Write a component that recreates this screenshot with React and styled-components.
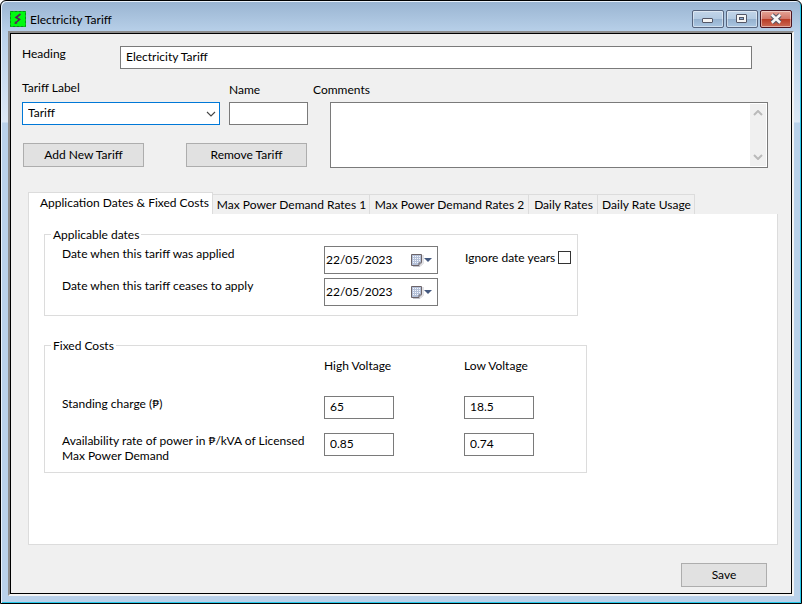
import React, { useState } from "react";
import styled, { createGlobalStyle } from "styled-components";

const tabs = [
  { id: "dates", name: "Application Dates & Fixed Costs", width: 185 },
  { id: "max1", name: "Max Power Demand Rates 1", width: 157 },
  { id: "max2", name: "Max Power Demand Rates 2", width: 159 },
  { id: "daily", name: "Daily Rates", width: 69 },
  { id: "usage", name: "Daily Rate Usage", width: 97 },
];

const costs = [
  { id: "standing", name: "Standing charge (₱)", high: "65", low: "18.5" },
  {
    id: "availability",
    name: "Availability rate of power in ₱/kVA of Licensed Max Power Demand",
    high: "0.85",
    low: "0.74",
  },
];

const BoltIcon = () => (
  <svg width="16" height="16" viewBox="0 0 16 16" aria-hidden="true">
    <rect width="16" height="16" fill="#00fa10" />
    <rect
      x="0.5"
      y="0.5"
      width="15"
      height="15"
      fill="none"
      stroke="#0c8a1c"
      strokeDasharray="3 1"
    />
    <path
      d="M10.5 3L6 6.5L9.5 8.5L5.5 12"
      fill="none"
      stroke="#5a1a5c"
      strokeWidth="1.6"
    />
    <path d="M4.5 13L5 10.3L7.5 12.5Z" fill="#5a1a5c" />
  </svg>
);

const MinimizeIcon = () => (
  <svg width="12" height="12" viewBox="0 0 12 12" aria-hidden="true">
    <rect x="0.5" y="5.5" width="10" height="4" rx="0.5" fill="#f4f4f4" stroke="#535666" />
  </svg>
);

const MaximizeIcon = () => (
  <svg width="12" height="12" viewBox="0 0 12 12" aria-hidden="true">
    <rect x="0.5" y="1.5" width="10" height="8" rx="0.5" fill="#f4f4f4" stroke="#535666" />
    <rect x="3.5" y="4.5" width="4" height="2" fill="#8fb0d6" stroke="#535666" />
  </svg>
);

const CloseIcon = () => (
  <svg width="12" height="12" viewBox="0 0 12 12" aria-hidden="true">
    <path d="M2 2L10 9.5M10 2L2 9.5" stroke="#535666" strokeWidth="4.6" />
    <path d="M1.8 1.8L10.2 9.7M10.2 1.8L1.8 9.7" stroke="#f6f6f6" strokeWidth="2.6" />
  </svg>
);

const Chevron = ({ up, color = "#444" }) => (
  <svg width="10" height="6" viewBox="0 0 10 6" aria-hidden="true">
    <path
      d={up ? "M1 5L5 1L9 5" : "M1 1L5 5L9 1"}
      fill="none"
      stroke={color}
      strokeWidth={up !== undefined ? 2 : 1.1}
    />
  </svg>
);

const CalendarIcon = () => (
  <svg width="22" height="14" viewBox="0 0 22 14" aria-hidden="true">
    <path d="M2 13.5H9L12 10.5V2" fill="none" stroke="#c4c4cc" />
    <path d="M0.5 1.5H10.5V9.5L8 12.5H0.5Z" fill="#b4c0d8" stroke="#6c6468" />
    <path
      d="M2 3.5H9M2 5.5H9M2 7.5H9M2 9.5H8"
      stroke="#f4f7fd"
      strokeWidth="1"
      strokeDasharray="1 1"
    />
    <path d="M8 12.5V10H10.5" fill="#d0d4de" stroke="#6c6468" />
    <path d="M13 5H21L17 9Z" fill="#44597f" />
  </svg>
);

function DateField({ id, value, onChange }) {
  return (
    <DateBox>
      <input id={id} type="text" value={value} onChange={(e) => onChange(e.target.value)} />
      <button type="button" aria-label="Open calendar">
        <CalendarIcon />
      </button>
    </DateBox>
  );
}

function App() {
  const [active, setActive] = useState("dates");
  const [applied, setApplied] = useState("22/05/2023");
  const [ceases, setCeases] = useState("22/05/2023");

  return (
    <>
      <GlobalStyle />
      <WindowStyled>
        <TitleBar>
          <BoltIcon />
          <h1>Electricity Tariff</h1>
          <CaptionButton type="button" aria-label="Minimize">
            <MinimizeIcon />
          </CaptionButton>
          <CaptionButton type="button" aria-label="Maximize">
            <MaximizeIcon />
          </CaptionButton>
          <CaptionButton type="button" aria-label="Close" $close>
            <CloseIcon />
          </CaptionButton>
        </TitleBar>

        <Frame>
          <Client>
            <HeadingRow>
              <label htmlFor="heading">Heading</label>
              <TextInput id="heading" type="text" defaultValue="Electricity Tariff" />
            </HeadingRow>

            <TariffRow>
              <TariffColumn>
                <FieldRow>
                  <Field $gap={7} $width={198}>
                    <label htmlFor="tariff">Tariff Label</label>
                    <SelectBox>
                      <select id="tariff" defaultValue="Tariff">
                        <option>Tariff</option>
                      </select>
                      <Chevron />
                    </SelectBox>
                  </Field>
                  <Field $gap={5} $width={79}>
                    <label htmlFor="name">Name</label>
                    <TextInput id="name" type="text" />
                  </Field>
                </FieldRow>
                <ButtonRow>
                  <Button type="button">Add New Tariff</Button>
                  <Button type="button">Remove Tariff</Button>
                </ButtonRow>
              </TariffColumn>
              <Comments>
                <label htmlFor="comments">Comments</label>
                <CommentsBox>
                  <textarea id="comments" />
                  <ScrollTrack>
                    <Chevron up color="#bababa" />
                    <Chevron up={false} color="#bababa" />
                  </ScrollTrack>
                </CommentsBox>
              </Comments>
            </TariffRow>

            <TabArea>
              <TabList role="tablist">
                {tabs.map((tab) => (
                  <Tab
                    key={tab.id}
                    type="button"
                    role="tab"
                    aria-selected={tab.id === active}
                    $active={tab.id === active}
                    $width={tab.width}
                    onClick={() => setActive(tab.id)}
                  >
                    {tab.name}
                  </Tab>
                ))}
              </TabList>
              <TabPanel role="tabpanel">
                {active === "dates" && (
                  <>
                    <Group $width={534}>
                      <legend>Applicable dates</legend>
                      <DatesGrid>
                        <label htmlFor="applied">Date when this tariff was applied</label>
                        <DateField id="applied" value={applied} onChange={setApplied} />
                        <CheckLabel>
                          Ignore date years
                          <input type="checkbox" />
                        </CheckLabel>
                        <label htmlFor="ceases">Date when this tariff ceases to apply</label>
                        <DateField id="ceases" value={ceases} onChange={setCeases} />
                      </DatesGrid>
                    </Group>

                    <Group $width={543}>
                      <legend>Fixed Costs</legend>
                      <CostTable>
                        <thead>
                          <tr>
                            <td />
                            <th scope="col">High Voltage</th>
                            <th scope="col">Low Voltage</th>
                          </tr>
                        </thead>
                        <tbody>
                          {costs.map((cost) => (
                            <tr key={cost.id}>
                              <th scope="row">
                                <label htmlFor={cost.id}>{cost.name}</label>
                              </th>
                              <td>
                                <TextInput id={cost.id} type="text" defaultValue={cost.high} />
                              </td>
                              <td>
                                <TextInput
                                  type="text"
                                  aria-label={`${cost.name}, Low Voltage`}
                                  defaultValue={cost.low}
                                />
                              </td>
                            </tr>
                          ))}
                        </tbody>
                      </CostTable>
                    </Group>
                  </>
                )}
              </TabPanel>
            </TabArea>

            <Footer>
              <Button type="button" $width={86}>
                Save
              </Button>
            </Footer>
          </Client>
        </Frame>
      </WindowStyled>
    </>
  );
}

const GlobalStyle = createGlobalStyle`
  * {
    box-sizing: border-box;
  }
  body {
    margin: 0;
    background: #fff;
    color: #000;
  }
  body, input, select, textarea, button {
    color: #000;
    font-family: "Segoe UI", Lato, "Open Sans", sans-serif;
    font-size: 12px;
    line-height: 15px;
  }
  label, legend, h1, button {
    white-space: nowrap;
  }
`;

const WindowStyled = styled.div`
  display: flex;
  flex-direction: column;
  min-height: 100vh;
  padding: 0 7px 7px;
  border: 1px solid #000;
  border-radius: 6px 6px 0 0;
  background: linear-gradient(#99b4d1, #b9d1ea 32px, #dce8f5 121px, #b9d1ea 122px);
  box-shadow: inset 1px 1px 0 #e8f1fa, inset -1px -1px 0 #27c8ea;
`;

const TitleBar = styled.header`
  display: flex;
  align-items: center;
  gap: 2px;
  height: 30px;
  padding: 6px 2px 0 2px;

  h1 {
    flex: 1;
    margin: 0 0 0 2px;
    font-size: 12px;
    font-weight: 400;
  }
`;

const CaptionButton = styled.button`
  display: flex;
  align-items: center;
  justify-content: center;
  width: 32px;
  height: 18px;
  padding: 0;
  border: 1px solid ${(props) => (props.$close ? "#4c1420" : "#56647e")};
  border-radius: 2px;
  background: ${(props) =>
    props.$close
      ? "linear-gradient(#e5a497, #d3776a 48%, #b83a24 50%, #cb6a55)"
      : "linear-gradient(#c2d5e9, #b3cae2 48%, #94b0ce 50%, #aac6e2)"};
  box-shadow: inset 0 0 0 1px rgba(255, 255, 255, 0.45);
`;

const Frame = styled.div`
  display: flex;
  flex: 1;
  border: 2px solid;
  border-color: #8c8c8c #f4f4f4 #f4f4f4 #8c8c8c;
`;

const Client = styled.main`
  display: flex;
  flex: 1;
  flex-direction: column;
  min-width: 0;
  padding: 12px 13px 6px 11px;
  border: 1px solid #000;
  background: #f0f0f0;
`;

const TextInput = styled.input`
  width: 100%;
  height: 23px;
  padding: 0 5px 2px;
  border: 1px solid #7a7a7a;
  border-radius: 0;
  background: #fff;
`;

const HeadingRow = styled.div`
  display: flex;
  align-items: flex-start;
  margin-right: 26px;

  label {
    flex: 0 0 98px;
  }
`;

const TariffRow = styled.div`
  display: flex;
  gap: 5px;
  margin: 11px 10px 25px 0;
`;

const TariffColumn = styled.div`
  display: flex;
  flex-direction: column;
  gap: 18px;
`;

const FieldRow = styled.div`
  display: flex;
  gap: 9px;
`;

const Field = styled.div`
  display: flex;
  flex-direction: column;
  justify-content: flex-end;
  gap: ${(props) => props.$gap}px;
  width: ${(props) => props.$width}px;
`;

const SelectBox = styled.div`
  position: relative;

  select {
    display: block;
    width: 100%;
    height: 23px;
    padding: 0 5px 2px;
    border: 1px solid #0078d7;
    border-radius: 0;
    background: #fff;
    appearance: none;
  }

  svg {
    position: absolute;
    top: 9px;
    right: 4px;
    pointer-events: none;
  }
`;

const ButtonRow = styled.div`
  display: flex;
  justify-content: space-between;
  padding: 0 1px;
`;

const Button = styled.button`
  width: ${(props) => props.$width || 121}px;
  height: 24px;
  padding: 0 0 2px;
  border: 1px solid #adadad;
  background: #e1e1e1;
`;

const Comments = styled.div`
  display: flex;
  flex: 1;
  flex-direction: column;
  gap: 5px;
  padding-top: 2px;
`;

const CommentsBox = styled.div`
  position: relative;
  flex: 1;
  min-height: 66px;
  margin: 0 0 -1px 17px;

  textarea {
    display: block;
    width: 100%;
    height: 100%;
    padding: 3px 22px 3px 5px;
    border: 1px solid #7a7a7a;
    resize: none;
  }
`;

const ScrollTrack = styled.div`
  position: absolute;
  top: 2px;
  right: 2px;
  bottom: 2px;
  display: flex;
  flex-direction: column;
  align-items: center;
  justify-content: space-between;
  width: 16px;
  padding: 6px 0;
  background: #f0f0f0;
`;

const TabArea = styled.section`
  display: flex;
  flex: 1;
  flex-direction: column;
  margin-left: 6px;
`;

const TabList = styled.div`
  display: flex;
  align-items: flex-end;
`;

const Tab = styled.button`
  width: ${(props) => props.$width}px;
  height: ${(props) => (props.$active ? 22 : 20)}px;
  padding: ${(props) => (props.$active ? "0 0 2px 8px" : "0 0 0 1px")};
  border: 1px solid #dcdcdc;
  border-width: ${(props) => (props.$active ? "1px 1px 0" : "1px 1px 0 0")};
  background: ${(props) => (props.$active ? "#fff" : "#f0f0f0")};
`;

const TabPanel = styled.div`
  flex: 1;
  padding: 13px 15px;
  border: 1px solid #dcdcdc;
  border-top: none;
  background: #fff;
`;

const Group = styled.fieldset`
  max-width: ${(props) => props.$width}px;
  margin: 0 0 22px;
  padding: 4px 0 9px 17px;
  border: 1px solid #dcdcdc;

  legend {
    margin-left: -11px;
    padding: 0 2px;
  }
`;

const DatesGrid = styled.div`
  display: grid;
  grid-template-columns: 262px 114px auto;
  justify-content: start;
  align-items: start;
  row-gap: 4px;
`;

const DateBox = styled.div`
  display: flex;
  align-items: center;
  height: 28px;
  border: 1px solid #7a7a7a;
  background: #fff;

  input {
    flex: 1;
    min-width: 0;
    padding: 0 1px 2px;
    border: none;
    outline: none;
  }

  button {
    display: flex;
    padding: 0 4px 0 0;
    border: none;
    background: none;
  }
`;

const CheckLabel = styled.label`
  display: flex;
  align-items: center;
  gap: 3px;
  margin: 4px 0 0 27px;

  input {
    width: 13px;
    height: 13px;
    margin: 0;
    border: 1px solid #333;
    background: #fff;
    appearance: none;
  }

  input:checked {
    box-shadow: inset 0 0 0 2px #fff;
    background: #333;
  }
`;

const CostTable = styled.table`
  border-collapse: collapse;
  table-layout: fixed;
  width: 472px;

  th,
  td {
    padding: 0 0 14px;
    font-weight: 400;
    text-align: left;
    vertical-align: top;
  }

  thead td {
    width: 262px;
  }

  thead th {
    width: 140px;
    padding: 1px 0 23px;
  }

  thead th:last-child {
    width: 70px;
  }

  tbody tr:last-child > * {
    padding-bottom: 0;
  }

  tbody label {
    display: block;
    max-width: 250px;
    white-space: normal;
  }

  input {
    display: block;
    width: 70px;
  }
`;

const Footer = styled.footer`
  display: flex;
  justify-content: flex-end;
  padding: 18px 11px 0 0;
`;

export default App;
